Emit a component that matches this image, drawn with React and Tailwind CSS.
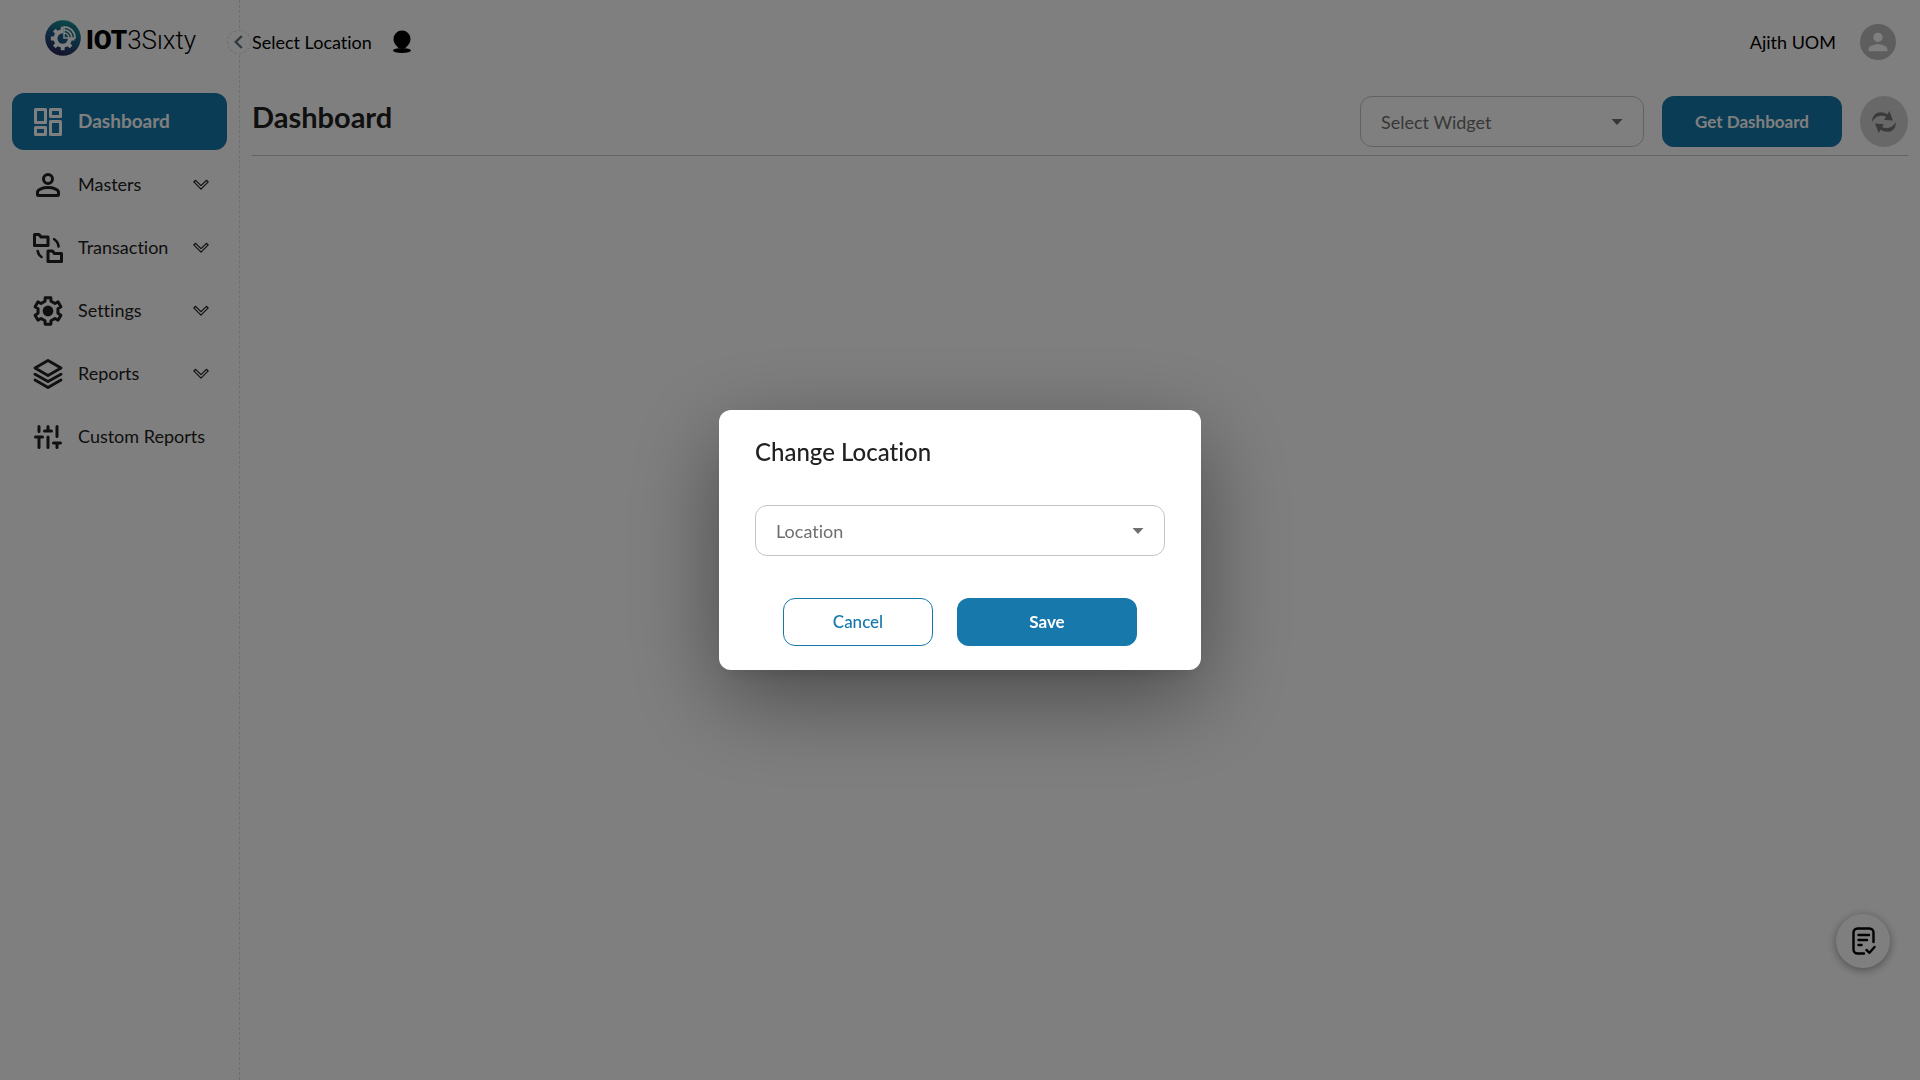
import { MdPerson } from "react-icons/md"
import clsx from "clsx"

// closed outline of a cog, cx/cy centre, ro/ri outer and root radius
function cogPath(cx, cy, ro, ri, teeth, wo, wi) {
  const pts = []
  for (let i = 0; i < teeth; i++) {
    const a = (i * 360) / teeth - 90
    ;[[ri, -wi], [ro, -wo], [ro, wo], [ri, wi]].forEach(([r, d]) => {
      const t = ((a + d) * Math.PI) / 180
      pts.push(`${(cx + r * Math.cos(t)).toFixed(2)} ${(cy + r * Math.sin(t)).toFixed(2)}`)
    })
  }
  return `M${pts.join("L")}Z`
}

const stroke = {
  fill: "none",
  stroke: "currentColor",
  strokeWidth: 3,
  strokeLinecap: "round",
  strokeLinejoin: "round"
}

const DashboardIcon = () => (
  <svg width="28" height="28" viewBox="0 0 28 28" {...stroke}>
    <rect x="1.5" y="1.5" width="10" height="13" />
    <rect x="16.5" y="1.5" width="10" height="7" />
    <rect x="1.5" y="19.5" width="10" height="7" />
    <rect x="16.5" y="13.5" width="10" height="13" />
  </svg>
)

const PersonIcon = () => (
  <svg width="24" height="24" viewBox="0 0 24 24" {...stroke}>
    <circle cx="12" cy="6" r="4.5" />
    <path d="M1.5 19.2C1.5 16.2 7 14.6 12 14.6s10.5 1.6 10.5 4.6V21.5a1 1 0 0 1-1 1h-19a1 1 0 0 1-1-1z" />
  </svg>
)

const TransferIcon = () => (
  <svg width="30" height="30" viewBox="0 0 30 30" {...stroke}>
    <path d="M1.5 1.5H6l2 2.5h7v8.5H1.5z" />
    <path d="M15 18h4.5l2 2.5h7v8H15z" />
    <path strokeWidth="2.6" d="M21.2 6.2C23.8 8 25.3 10.5 25.6 13.500M4.700 18C5.200 21 6.500 22.800 8.500 24" />
  </svg>
)

const GearIcon = () => (
  <svg width="30" height="30" viewBox="0 0 30 30" {...stroke}>
    <path d={cogPath(15, 15, 13.6, 10.2, 6, 12, 17)} />
    <circle cx="15" cy="15" r="5.4" fill="currentColor" stroke="none" />
  </svg>
)

const LayersIcon = () => (
  <svg width="30" height="30" viewBox="0 0 30 30" {...stroke} strokeWidth="2.8">
    <path d="M15 1.5l13 7.5-13 7.5L2 9z" />
    <path d="M2 15.3l13 7.2 13-7.2M2 21l13 7.5L28 21" />
  </svg>
)

const SlidersIcon = () => (
  <svg width="28" height="24" viewBox="0 0 28 24" {...stroke}>
    <path d="M5 1.5v5M1.5 12h7M5 12v10.5M14 1.5v4M10.5 6h7M14 12v10.5M23 1.5v10M19.5 18h7M23 18v4.5" />
  </svg>
)

const ChevronIcon = () => (
  <svg width="16" height="11" viewBox="0 0 16 11" fill="none" stroke="currentColor" strokeWidth="1.2" strokeLinejoin="round">
    <path d="M.8 2.9L2.6 1.3 8 6.7 13.4 1.3l1.8 1.6L8 10.2z" />
  </svg>
)

const CaretIcon = () => (
  <svg className="pointer-events-none absolute inset-y-0 right-[21px] my-auto text-[#6f6f6f]" width="12" height="6" viewBox="0 0 12 6" fill="currentColor">
    <path d="M.5 0h11L6 6z" />
  </svg>
)

const PinIcon = () => (
  <svg width="20" height="24" viewBox="0 0 20 24" fill="currentColor">
    <path d="M10 .5a8.5 8.5 0 0 1 8.5 8.5c0 4-2.5 6.500-5 9h-7c-2.500-2.500-5-5-5-9A8.500 8.500 0 0 1 10 .5z" />
    <ellipse cx="10" cy="20.5" rx="9" ry="2.6" />
  </svg>
)

const RefreshIcon = () => (
  <svg width="24" height="22" viewBox="0 0 24 22" fill="currentColor">
    <path id="arrow" d="M.3 11C-.3 5.5 3.5 1.2 8.5 1.2c2.8 0 5 .8 7 2L17.3 0 21 9.5l-9-.8 2.2-2.8C9.5 3.5 3 5 .3 11z" />
    <use href="#arrow" transform="rotate(180 12 11)" />
  </svg>
)

const NoteIcon = () => (
  <svg width="24" height="28" viewBox="0 0 24 28" {...stroke} strokeWidth="2.4">
    <path d="M12 26.5H5.5a4 4 0 0 1-4-4v-17a4 4 0 0 1 4-4h12a4 4 0 0 1 4 4V15" />
    <path d="M6.5 8h10.5M6.5 13h8.5M6.5 18h3M14.5 23l3 2.8 5-5.8" />
  </svg>
)

function Logo() {
  return (
    <a href="#" className="flex items-start gap-[5px]" aria-label="IOT3Sıxty">
      <svg width="36" height="36" viewBox="0 0 36 36">
        <defs>
          <linearGradient id="logoFill" x1=".7" y1="0" x2=".3" y2="1">
            <stop offset="0" stopColor="#16958f" />
            <stop offset=".5" stopColor="#1c5a84" />
            <stop offset="1" stopColor="#2c1f52" />
          </linearGradient>
        </defs>
        <circle cx="18" cy="18" r="17.8" fill="url(#logoFill)" />
        <path d={cogPath(17.7, 18.5, 12, 9.2, 8, 9, 12)} fill="#fff" />
        <circle cx="17.7" cy="18.5" r="5.2" fill="#1c5a84" />
        <path d="M18.3 5.5H31V18H18.3z" fill="#1b7288" />
        <g fill="none" stroke="#fff">
          <path strokeWidth="1.8" d="M19 6.8A11 11 0 0 1 30 17.5" />
          <path strokeWidth="1.6" d="M19 10a7.8 7.8 0 0 1 7.8 7.5" />
          <path strokeWidth="1.5" d="M19 13a4.8 4.8 0 0 1 4.8 4.5M19 6v12h11.800" />
        </g>
      </svg>
      <span className="flex items-baseline pt-0.5 font-[Roboto,sans-serif] text-[26px] leading-9 text-black">
        <span className="font-black">IOT</span>
        <span className="font-light">3Sıxty</span>
      </span>
    </a>
  )
}

const menu = [
  { label: "Dashboard", icon: DashboardIcon, active: true },
  { label: "Masters", icon: PersonIcon, sub: true },
  { label: "Transaction", icon: TransferIcon, sub: true },
  { label: "Settings", icon: GearIcon, sub: true },
  { label: "Reports", icon: LayersIcon, sub: true },
  { label: "Custom Reports", icon: SlidersIcon }
]

function Sidebar() {
  return (
    <aside className="relative w-60 shrink-0 border-r border-dashed border-[#919eab]/35 px-3">
      <div className="flex h-[93px] items-start pt-5 pl-[33px]">
        <Logo />
      </div>
      <nav className="flex flex-col gap-[6px]">
        {menu.map(({ label, icon: Icon, active, sub }) => (
          <a
            key={label}
            href="#"
            className={clsx(
              "flex h-[57px] items-center rounded-xl pr-[18px] pl-5",
              active ? "bg-[#1678ab] text-[19px] font-bold text-white" : "text-[18px] text-[#212121]"
            )}
          >
            <span className="flex w-8 shrink-0 justify-center"><Icon /></span>
            <span className="ml-[14px] flex-1 whitespace-nowrap">{label}</span>
            {sub && <ChevronIcon />}
          </a>
        ))}
      </nav>
      <button
        type="button"
        aria-label="Collapse menu"
        className="absolute top-[30px] -right-3 flex size-6 items-center justify-center rounded-full border border-dashed border-[#919eab]/35 bg-white pr-0.5 text-[#637381]"
      >
        <svg width="9" height="14" viewBox="0 0 9 14" fill="none" stroke="currentColor" strokeWidth="2.4">
          <path d="M7.8 1L1.8 7l6 6" />
        </svg>
      </button>
    </aside>
  )
}

function SelectBox({ label, className }) {
  return (
    <div className={clsx("relative", className)}>
      <select
        aria-label={label}
        className="h-[51px] w-full appearance-none rounded-xl border border-[#c4c4c4] bg-white px-5 pt-0.5 text-[18px] text-[#6f6f6f]"
      >
        <option>{label}</option>
      </select>
      <CaretIcon />
    </div>
  )
}

function LocationDialog() {
  return (
    <div className="fixed inset-0 z-20 flex items-center justify-center bg-black/50">
      <div
        role="dialog"
        aria-labelledby="dialog-title"
        className="w-[482px] rounded-xl bg-white px-9 pt-6 pb-6 shadow-[0_11px_15px_-7px_rgba(0,0,0,0.1),0_28px_90px_0_rgba(0,0,0,0.42)]"
      >
        <h2 id="dialog-title" className="text-[24px] leading-9 font-medium text-[#212121]">
          Change Location
        </h2>
        <SelectBox label="Location" className="mt-[35px]" />
        <div className="mt-[42px] flex justify-center gap-6">
          <button type="button" className="h-12 w-[150px] rounded-xl border border-[#1678ab] text-[17px] font-medium text-[#1678ab]">
            Cancel
          </button>
          <button type="button" className="h-12 w-[180px] rounded-xl bg-[#1678ab] text-[17px] font-bold text-white">
            Save
          </button>
        </div>
      </div>
    </div>
  )
}

export default function App() {
  return (
    <div className="flex min-h-screen bg-white font-[Lato,sans-serif] [font-variant-ligatures:none]">
      <Sidebar />
      <div className="flex flex-1 flex-col px-3">
        <header className="flex h-[84px] items-center justify-between text-[18px] text-black">
          <div className="flex items-center gap-5">
            <span>Select Location</span>
            <PinIcon />
          </div>
          <div className="flex items-center gap-6 pr-3">
            <span>Ajith UOM</span>
            <button type="button" aria-label="Account" className="flex size-9 items-center justify-center rounded-full bg-[#bdbdbd] text-white">
              <MdPerson size={28} />
            </button>
          </div>
        </header>

        <div className="flex items-start justify-between border-b border-[#c8c8c8] pt-3 pb-2">
          <h1 className="text-[29px] leading-[42px] font-bold text-[#212121]">Dashboard</h1>
          <div className="flex gap-[18px]">
            <SelectBox label="Select Widget" className="w-[284px]" />
            <button type="button" className="w-[180px] rounded-xl bg-[#1678ab] text-[17px] font-bold text-white">
              Get Dashboard
            </button>
            <button type="button" aria-label="Refresh" className="flex w-12 items-center justify-center rounded-[50%] bg-[#d0d0d0] text-[#757575]">
              <RefreshIcon />
            </button>
          </div>
        </div>
      </div>

      <button
        type="button"
        aria-label="Notes"
        className="fixed right-[30px] bottom-28 z-10 flex size-[54px] items-center justify-center rounded-full bg-white pl-0.5 text-black shadow-[0_2px_10px_rgba(0,0,0,0.4)]"
      >
        <NoteIcon />
      </button>

      <LocationDialog />
    </div>
  )
}
